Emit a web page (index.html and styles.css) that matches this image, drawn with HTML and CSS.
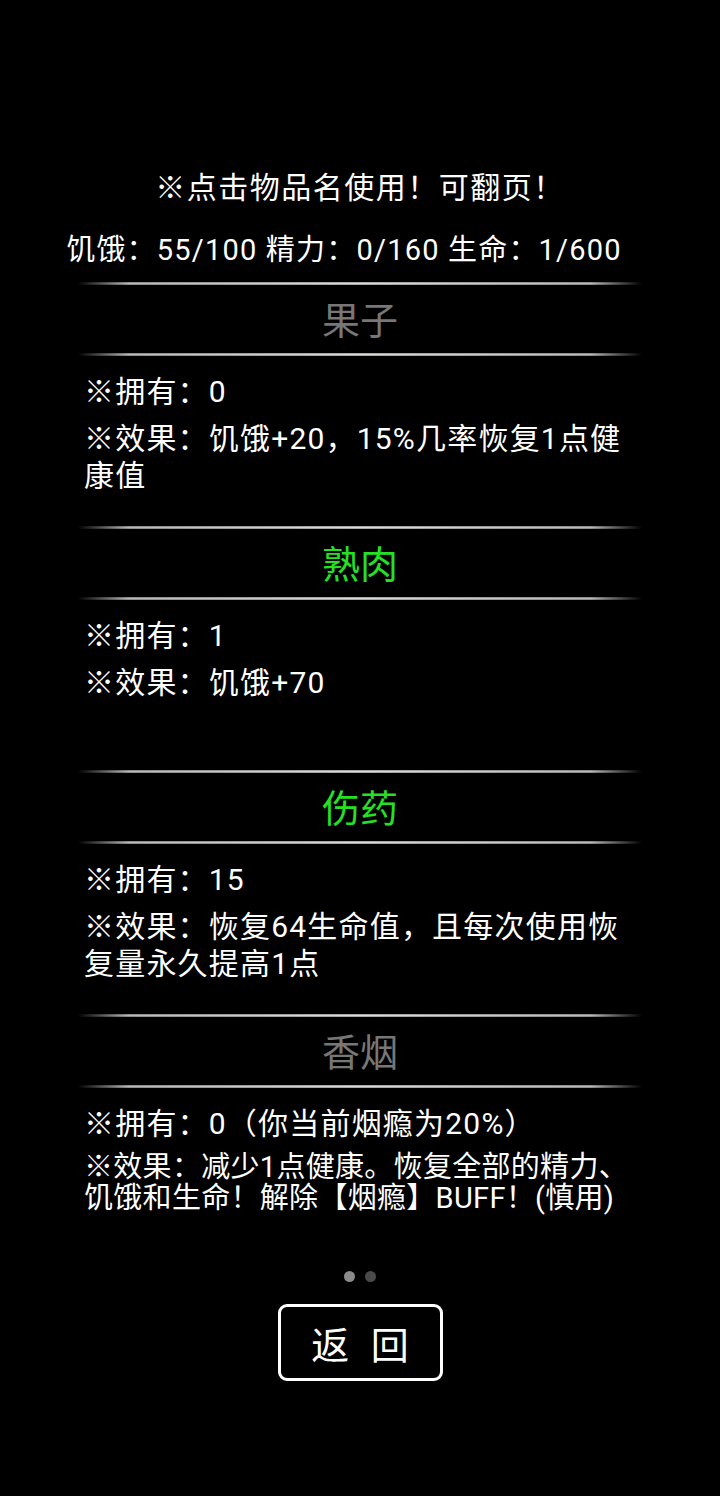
FILE: index.html
```html
<!DOCTYPE html>
<html lang="zh-CN">

<head>
    <meta charset="UTF-8">
    <meta name="viewport" content="width=device-width, initial-scale=1.0">
    <title>物品</title>
    <link rel="stylesheet" href="styles.css">
</head>

<body>
    <main class="bag">
        <p class="tip">※点击物品名使用！可翻页！</p>
        <p class="stats">饥饿：55/100 精力：0/160 生命：1/600</p>

        <div class="item-list">
            <section class="item">
                <div class="rule"></div>
                <h2 class="item-name empty">果子</h2>
                <div class="rule"></div>
                <div class="item-info">
                    <p>※拥有：0</p>
                    <p>※效果：饥饿+20，15%几率恢复1点健康值</p>
                </div>
            </section>

            <section class="item">
                <div class="rule"></div>
                <h2 class="item-name">熟肉</h2>
                <div class="rule"></div>
                <div class="item-info">
                    <p>※拥有：1</p>
                    <p>※效果：饥饿+70</p>
                </div>
            </section>

            <section class="item">
                <div class="rule"></div>
                <h2 class="item-name">伤药</h2>
                <div class="rule"></div>
                <div class="item-info">
                    <p>※拥有：15</p>
                    <p>※效果：恢复64生命值，且每次使用恢复量永久提高1点</p>
                </div>
            </section>

            <section class="item">
                <div class="rule"></div>
                <h2 class="item-name empty">香烟</h2>
                <div class="rule"></div>
                <div class="item-info">
                    <p>※拥有：0（你当前烟瘾为20%）</p>
                    <p class="tight">※效果：减少1点健康。恢复全部的精力、饥饿和生命！解除【烟瘾】BUFF！(慎用)</p>
                </div>
            </section>
        </div>

        <div class="pager">
            <span class="dot active"></span>
            <span class="dot"></span>
        </div>

        <a href="#" class="back-button">返 回</a>
    </main>
</body>

</html>
```

FILE: styles.css
```css
body {
    margin: 0;
    background-color: #000;
    color: #fff;
    font-family: Roboto, "Noto Sans CJK SC", sans-serif;
}

.bag {
    width: 720px;
    min-height: 1496px;
    padding-top: 168px;
    box-sizing: border-box;
    display: flex;
    flex-direction: column;
    align-items: center;
}

.tip,
.stats {
    margin: 0;
    line-height: 40px;
    text-align: center;
}

.tip {
    font-size: 30px;
    letter-spacing: 1.5px;
}

.stats {
    margin-top: 22px;
    padding-right: 32px;
    font-size: 29px;
    letter-spacing: 1.2px;
}

.item-list {
    width: 564px;
    margin-top: 12px;
}

.item {
    display: flex;
    flex-direction: column;
}

/* thin glowing divider, fades out at both ends */
.rule {
    height: 3px;
    background:
        linear-gradient(180deg, rgba(0, 0, 0, 0.4), rgba(0, 0, 0, 0) 40%, rgba(0, 0, 0, 0) 60%, rgba(0, 0, 0, 0.4)),
        linear-gradient(90deg, rgba(190, 190, 190, 0), #b8b8b8 9%, #dcdcdc 50%, #b8b8b8 91%, rgba(190, 190, 190, 0));
}

.item-name {
    margin: 0;
    height: 68px;
    padding-bottom: 4px;
    box-sizing: border-box;
    display: flex;
    align-items: center;
    justify-content: center;
    font-size: 38px;
    font-weight: normal;
    color: #26e026;
}

.item-name.empty {
    color: #777;
}

.item-info {
    height: 170px;
    padding: 17px 0 0 6px;
    box-sizing: border-box;
}

.item-info p {
    margin: 0 0 10px;
    font-size: 30px;
    line-height: 37px;
    letter-spacing: 1.2px;
}

/* long description: smaller and packed tighter so it fits two lines */
.item-info p.tight {
    font-size: 29px;
    line-height: 31px;
    letter-spacing: 0.3px;
}

.pager {
    display: flex;
    gap: 10px;
    margin-top: 13px;
}

.dot {
    width: 11px;
    height: 11px;
    border-radius: 50%;
    background-color: #4a4a4a;
}

.dot.active {
    background-color: #8a8a8a;
}

.back-button {
    margin-top: 22px;
    width: 165px;
    height: 77px;
    box-sizing: border-box;
    border: 3px solid #fff;
    border-radius: 9px;
    display: flex;
    align-items: center;
    justify-content: center;
    color: #fff;
    text-decoration: none;
    font-size: 38px;
    word-spacing: 12px;
}
```
